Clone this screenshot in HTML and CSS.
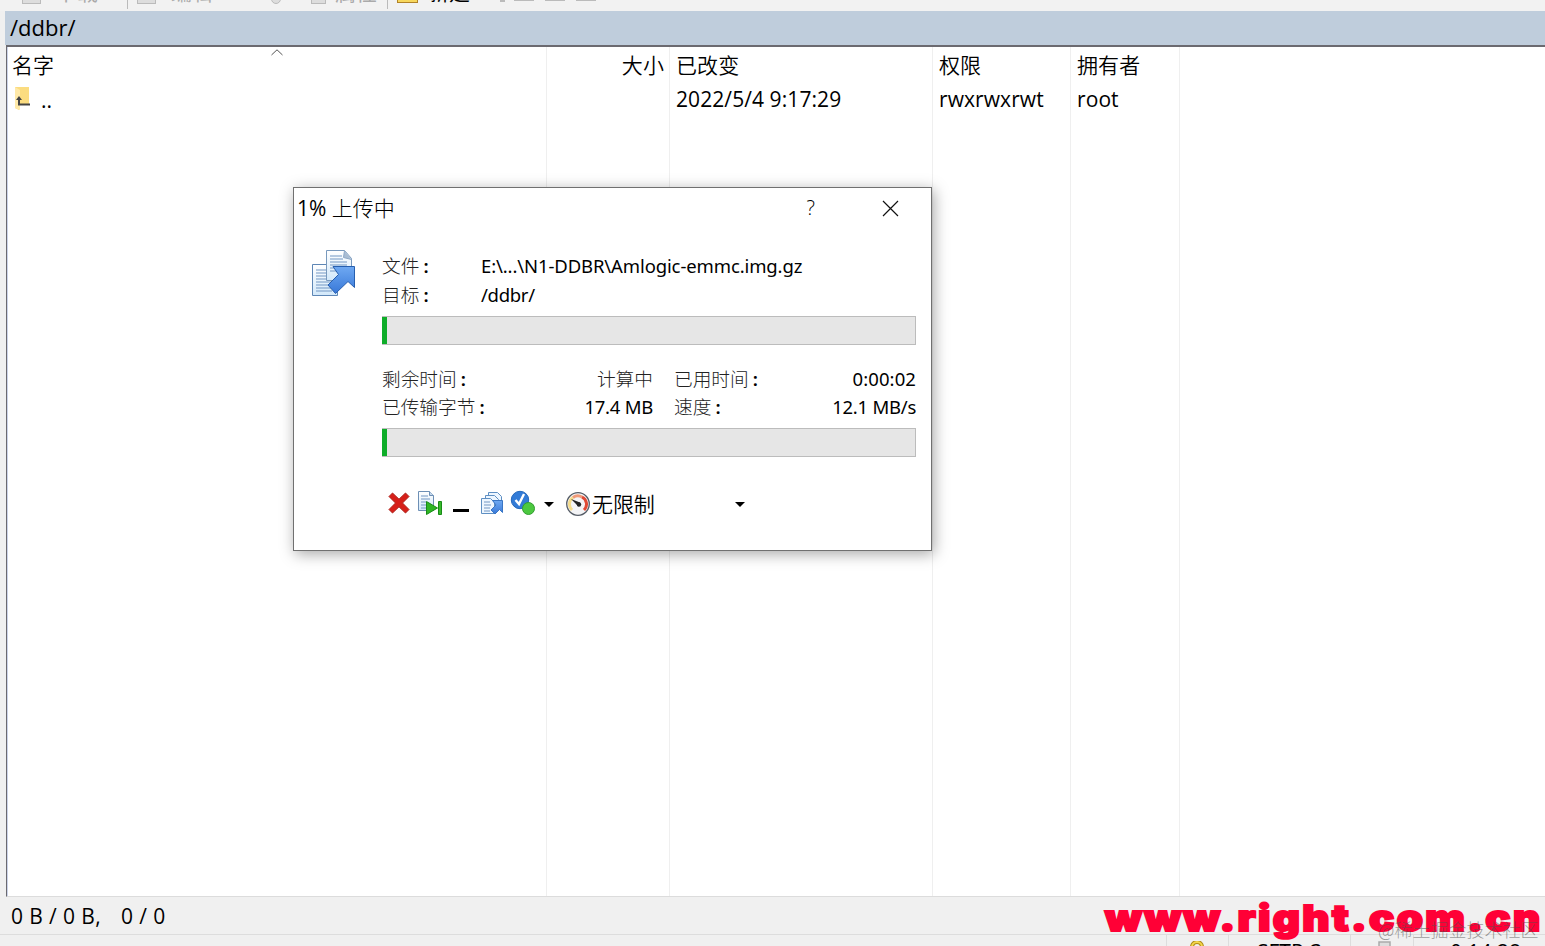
FILE: index.html
```
<!doctype html>
<html lang="zh-CN">
<head>
<meta charset="utf-8"/>
<title>/ddbr/</title>
<link rel="stylesheet" href="styles.css">
</head>
<body>
<div class="toolbar">
	<div class="tools">
		<i class="tool-icon"></i><span class="t1">下载</span>
		<i class="sep"></i>
		<i class="tool-icon"></i><span class="t2">编辑</span><span class="t3">✕</span><i class="tool-icon small"></i>
		<i class="tool-icon props"></i><span class="t4">属性</span>
		<i class="sep"></i>
		<i class="folder-new"></i><span class="t5">新建</span>
		<i class="dash tiny"></i><i class="dash"></i><i class="dash"></i><i class="dash"></i>
	</div>
</div>
<div class="path">/ddbr/</div>
<div class="list">
	<svg class="sort" width="12" height="7" viewBox="0 0 12 7"><path d="M.5 6 6 .8 11.500 6" fill="none" stroke="#555"/></svg>
	<div class="col name">
		<div class="head">名字</div>
		<div class="row">
			<svg width="18" height="25" viewBox="0 0 18 25">
				<path d="M1 1h14v18H6l-1 5-4-2z" fill="#fbdc80"/>
				<path d="M1 1l5 3v20l-5-2z" fill="#ffe9a8"/>
				<path d="M5 13v5.500h11" fill="none" stroke="#444" stroke-width="2"/>
				<path d="M2 14l3-4 3 4z" fill="#444"/>
			</svg>
			<span class="dots">..</span>
		</div>
	</div>
	<div class="col size"><div class="head">大小</div></div>
	<div class="col date"><div class="head">已改变</div><div class="row">2022/5/4 9:17:29</div></div>
	<div class="col rights"><div class="head">权限</div><div class="row">rwxrwxrwt</div></div>
	<div class="col owner"><div class="head">拥有者</div><div class="row">root</div></div>
</div>
<div class="status">0 B / 0 B,<span class="count">0 / 0</span></div>
<div class="bottom">
	<div class="cell lock">
		<svg width="16" height="18" viewBox="0 0 16 18"><path d="M3 12V6a5 5 0 0 1 10 0v6" fill="none" stroke="#b08a18" stroke-width="4"/><path d="M3 12V6a5 5 0 0 1 10 0v6" fill="none" stroke="#f4d84c" stroke-width="2"/></svg>
	</div>
	<div class="cell proto">SFTP-3</div>
	<div class="cell zip">
		<svg width="20" height="14" viewBox="0 0 20 14"><path d="M1 14V6h7V1h11v13M8 6h5v8" fill="#ddd" stroke="#aaa" stroke-width="1.500"/></svg>
	</div>
	<div class="cell time">0:14:28</div>
</div>

<div class="dialog">
	<div class="title">
		<span class="caption"><b>1%</b> 上传中</span>
		<span class="help">?</span>
		<svg class="close" width="17" height="17" viewBox="0 0 17 17"><path d="M1 1l15 15M16 1 1 16" stroke="#111" stroke-width="1.200"/></svg>
	</div>
	<div class="content">
		<svg class="upload" width="46" height="48" viewBox="0 0 46 48">
			<defs>
				<linearGradient id="paper" x1="0" y1="0" x2="0" y2="1"><stop offset="0" stop-color="#fff"/><stop offset="1" stop-color="#d2e8fa"/></linearGradient>
				<linearGradient id="blue" x1="0" y1="0" x2="0" y2="1"><stop offset="0" stop-color="#6fa9f2"/><stop offset="1" stop-color="#3878d8"/></linearGradient>
			</defs>
			<path d="M1.500 15.500h25v31h-25z" fill="url(#paper)" stroke="#5d86b5"/>
			<path d="M5 21h16M5 24h16M5 27h16M5 30h16M5 33h16M5 36h16M5 39h16M5 42h16" stroke="#7297c3"/>
			<path d="M15.500 1.500h18l7 8v22h-25z" fill="url(#paper)" stroke="#7899bd"/>
			<path d="M33.500 1.500l-1 7 8 2" fill="#a9bdd3" stroke="#8fa9c6"/>
			<path d="M19 7h12M19 10h13M19 13h17M19 16h17M19 19h17M19 22h17" stroke="#7297c3"/>
			<path d="M22 17.500h21.500v21l-6.500-6-12.500 12-7.500-8.500 10.500-10.500z" fill="url(#blue)" stroke="#275faf"/>
		</svg>
		<div class="info">
			<div class="line"><span class="label">文件<b>:</b></span><span class="file">E:\...\N1-DDBR\Amlogic-emmc.img.gz</span></div>
			<div class="line"><span class="label">目标<b>:</b></span><span class="target">/ddbr/</span></div>
			<div class="bar"><i></i></div>
			<div class="stats">
				<span class="label">剩余时间<b>:</b></span><span class="label value">计算中</span>
				<span class="label right">已用时间<b>:</b></span><span class="value elapsed">0:00:02</span>
				<span class="label">已传输字节<b>:</b></span><span class="value">17.4 MB</span>
				<span class="label right">速度<b>:</b></span><span class="value">12.1 MB/s</span>
			</div>
			<div class="bar"><i></i></div>
			<div class="buttons">
				<svg class="cancel" width="22" height="22" viewBox="0 0 22 22"><path d="M4.500 1 11 7.200 17.500 1 21 4.500 14.500 11 21 17.500 17.500 21 11 14.800 4.500 21 1 17.500 7.500 11 1 4.500z" fill="#d71f19" stroke="#ad2019" stroke-linejoin="round"/></svg>
				<svg class="skip" width="26" height="26" viewBox="0 0 26 26">
					<path d="M1.500 1.500h11l4 4v15h-15z" fill="url(#paper)" stroke="#6d8fb5"/><path d="M12.500 1.500v4h4" fill="#c6d9ed" stroke="#6d8fb5"/>
					<path d="M4 6h7M4 9h9M4 12h5M4 15h5M4 18h5" stroke="#7297c3"/>
					<path d="M9.500 11.500v13l11-6.500z" fill="#2fb525" stroke="#188b17"/><path d="M21.500 11.500h3v13h-3z" fill="#38b92c" stroke="#188b17"/>
				</svg>
				<i class="minimize"></i>
				<svg class="queue" width="24" height="24" viewBox="0 0 24 24">
					<path d="M8.500 1.500h9l4 4v9h-13z" fill="#edf6ff" stroke="#5e8fc3"/><path d="M5.500 4.500h9l4 4v9h-13z" fill="#edf6ff" stroke="#5e8fc3"/><path d="M1.500 7.500h9l4 4v11h-13z" fill="#edf6ff" stroke="#5e8fc3"/>
					<path d="M4 11h6M4 14h7M4 17h6M4 20h6" stroke="#7297c3"/>
					<path d="M12.500 9.500h10v12l-3-3-4.500 4.500-4-4 5-5z" fill="url(#blue)" stroke="#3976c5"/>
				</svg>
				<svg class="done" width="26" height="26" viewBox="0 0 26 26"><circle cx="10" cy="10" r="8.700" fill="#327bd7" stroke="#2468bb"/><path d="M5.500 10l3.500 4 5-10" fill="none" stroke="#fff" stroke-width="2.400"/><circle cx="18.500" cy="18.500" r="6" fill="#4cc840" stroke="#319d2f"/></svg>
				<i class="arrow"></i>
				<svg class="speed" width="26" height="26" viewBox="0 0 26 26">
					<circle cx="13" cy="13" r="11.300" fill="#f4f4f6" stroke="#555c66" stroke-width="1.300"/>
					<path d="M7 19A8 8 0 0 1 8 6.500" fill="none" stroke="#f5dc8c" stroke-width="3"/><path d="M8 6.500a8 8 0 0 1 9-.5" fill="none" stroke="#f09a78" stroke-width="3"/><path d="M17 6a8 8 0 0 1 2 13" fill="none" stroke="#e14a35" stroke-width="3"/>
					<path d="M6 8l9 3.500-1.500 4z" fill="#222"/><circle cx="14" cy="13.500" r="2.200" fill="#222"/>
				</svg>
				<span class="limit">无限制</span>
				<i class="arrow"></i>
			</div>
		</div>
	</div>
</div>
<div class="site-mark">www.right.com.cn</div>
<div class="author-mark">@稀土掘金技术社区</div>
</body>
</html>
```
FILE: styles.css
```
* {
	box-sizing: border-box;
}
body {
	display: flex;
	flex-direction: column;
	position: relative;
	width: 1545px;
	height: 946px;
	margin: 0;
	overflow: hidden;
	background: #f0f0f0;
	color: #000;
	font: 21px/34px "Open Sans", "Noto Sans CJK SC", sans-serif;
}
i {
	display: block;
	flex: none;
}
svg {
	display: block;
	flex: none;
}
.toolbar {
	height: 11px;
	overflow: hidden;
	background: #f2f2f2;
}
.tools {
	display: flex;
	align-items: flex-end;
	height: 9px;
	padding-left: 22px;
	color: #aaa;
	font-size: 21px;
	line-height: 28px;
	white-space: nowrap;
}
.tools span {
	height: 31px;
	flex: none;
}
.tool-icon {
	width: 19px;
	height: 15px;
	margin-bottom: 5px;
	border: 1px solid #bbb;
	background: #ddd;
}
.t1 {
	width: 86px;
	padding-left: 15px;
}
.sep {
	width: 1px;
	height: 20px;
	margin: 0 9px;
	background: #bbb;
}
.sep:first-of-type {
	margin-left: 0;
}
.t1 + .sep {
	margin-left: 0;
}
.t2 {
	width: 82px;
	padding-left: 15px;
}
.t3 {
	width: 33px;
}
.tool-icon.small {
	width: 10px;
	border-radius: 5px;
}
.tool-icon.props {
	width: 15px;
	margin-left: 30px;
}
.t4 {
	width: 52px;
	padding-left: 9px;
}
.folder-new {
	width: 21px;
	height: 20px;
	margin-bottom: 6px;
	border: 1px solid #b28328;
	background: #f7d75c;
}
.t5 {
	width: 82px;
	padding-left: 10px;
	color: #000;
}
.dash {
	width: 20px;
	height: 2px;
	margin: 0 11px 8px 0;
	background: #bbb;
}
.dash.tiny {
	width: 5px;
	margin: 0 9px 7px 0;
}
.path {
	height: 34px;
	margin-left: 5px;
	padding-left: 5px;
	background: #bfcddc;
	font-size: 22px;
	line-height: 32px;
}
.list {
	display: flex;
	position: relative;
	height: 852px;
	margin-left: 6px;
	border: solid #6b6a70;
	border-width: 2px 0 0 1px;
	border-bottom: 1px solid #dcdcdc;
	background: #fff;
}
.sort {
	position: absolute;
	left: 264px;
	top: 2px;
}
.col {
	border-right: 1px solid #efefef;
}
.head {
	height: 37px;
	line-height: 37px;
	font-weight: 350;
	letter-spacing: .1px;
}
.row {
	display: flex;
	height: 32px;
	line-height: 30px;
	letter-spacing: .08px;
	white-space: nowrap;
}
.name {
	width: 540px;
	padding-left: 5px;
	box-shadow: inset 2px 0 0 -1px #ccd3e8;
}
.name .row {
	align-items: center;
}
.name .row svg {
	margin: -4px 0 0 2px;
}
.dots {
	margin-left: 9px;
}
.size {
	width: 123px;
	padding-right: 5px;
	text-align: right;
}
.date {
	width: 263px;
	padding-left: 6px;
}
.rights {
	width: 138px;
	padding-left: 6px;
}
.owner {
	width: 109px;
	padding-left: 6px;
}
.status {
	height: 38px;
	padding-left: 11px;
	border-bottom: 1px solid #ddd;
	line-height: 38px;
	letter-spacing: .4px;
	white-space: pre;
}
.count {
	margin-left: 20px;
}
.bottom {
	display: flex;
	height: 11px;
	padding-left: 1166px;
	overflow: hidden;
	line-height: 30px;
}
.cell {
	flex: none;
	height: 40px;
	border-left: 1px solid #ddd;
	padding-top: 6px;
}
.lock {
	width: 62px;
	padding-left: 22px;
}
.proto {
	width: 122px;
	padding: 2px 0 0 28px;
}
.zip {
	width: 63px;
	padding-left: 20px;
}
.time {
	padding: 2px 0 0 36px;
}
.dialog {
	position: absolute;
	left: 293px;
	top: 187px;
	width: 639px;
	height: 364px;
	border: 1px solid #707070;
	background: #fff;
	box-shadow: 2px 3px 14px rgba(0, 0, 0, .35);
}
.title {
	display: flex;
	align-items: center;
	height: 40px;
	padding: 0 32px 0 3px;
}
.caption {
	flex: 1;
	font-weight: 300;
	font-size: 21px;
}
.caption b {
	font-weight: 400;
}
.help {
	margin-right: 67px;
	font-size: 20px;
	font-weight: 300;
}
.content {
	display: flex;
	padding: 21px 15px 0 17px;
}
.info {
	width: 534px;
	margin-left: 25px;
	padding-top: 2px;
	font-family: "Noto Sans", "Noto Sans CJK SC", sans-serif;
	font-size: 18.500px;
	letter-spacing: -.1px;
}
.line {
	display: flex;
	height: 29px;
	line-height: 30px;
	white-space: nowrap;
}
.file {
	letter-spacing: -.12px;
}
.target {
	letter-spacing: -.3px;
}
.label {
	font-weight: 300;
	font-size: 18.700px;
	letter-spacing: 0;
	color: #222;
}
.label b {
	margin-left: 4px;
	color: #000;
	font-weight: 600;
}
.line .label {
	width: 99px;
}
.bar {
	height: 29px;
	margin-top: 7px;
	border: 1px solid #bcbcbc;
	border-left: 0;
	background: #e6e6e6;
}
.bar i {
	width: 5px;
	height: 27px;
	background: #0ead29;
}
.stats {
	display: grid;
	grid-template-columns: 110px 161px 112px 151px;
	grid-auto-rows: 28px;
	margin-top: 20px;
	line-height: 28px;
	white-space: nowrap;
}
.value {
	text-align: right;
}
.value:not(.label) {
	letter-spacing: -.25px;
}
.value.elapsed {
	letter-spacing: .1px;
}
.right {
	padding-left: 21px;
}
.buttons {
	display: flex;
	align-items: center;
	height: 28px;
	margin: 32px 0 0 6px;
}
.skip {
	margin-left: 7px;
}
.minimize {
	width: 16px;
	height: 3px;
	margin: 14px 11px 0 10px;
	background: #000;
}
.done {
	margin-left: 6px;
}
.arrow {
	margin-top: 2px;
	border: 5px solid transparent;
	border-top-color: #000;
	border-bottom: 0;
}
.done + .arrow {
	margin: 2px 11px 0 8px;
}
.speed {
	margin-top: 2px;
}
.limit {
	width: 144px;
	padding-left: 1px;
	font-family: "Noto Sans CJK SC", sans-serif;
	font-size: 21px;
	font-weight: 350;
}
.site-mark {
	position: absolute;
	left: 1105px;
	top: 894px;
	color: #ff0036;
	font: 900 36px/48px Inter, sans-serif;
	letter-spacing: 2px;
	white-space: nowrap;
	transform: scaleX(1.167);
	transform-origin: 0 0;
	-webkit-text-stroke: 2px #ff0036;
}
.author-mark {
	position: absolute;
	left: 1378px;
	top: 916px;
	color: rgba(80, 80, 80, .55);
	font: 300 18px/27px "Noto Sans CJK SC", sans-serif;
	white-space: nowrap;
}
```
